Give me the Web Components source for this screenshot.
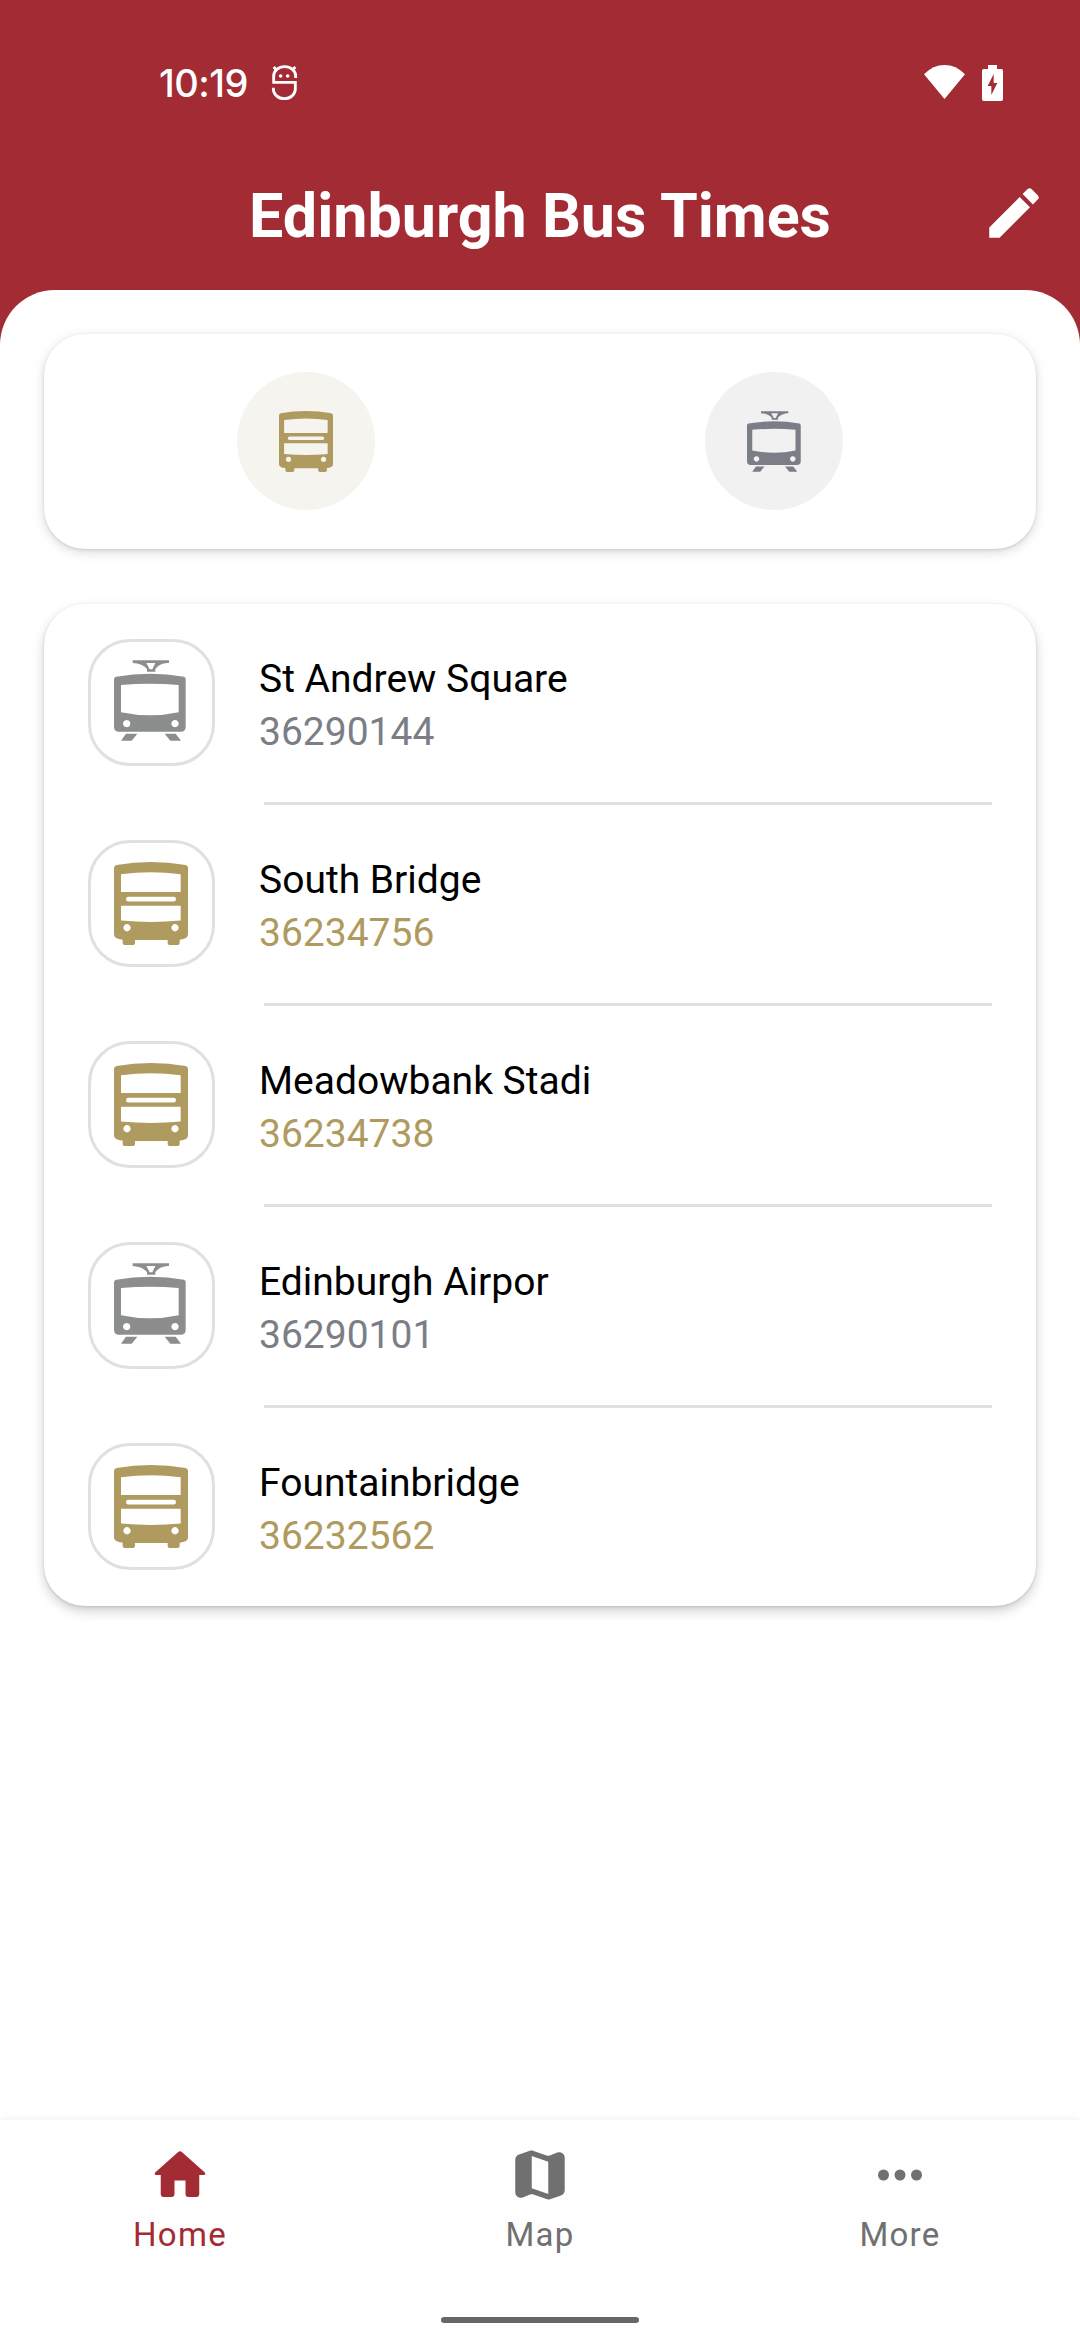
<!DOCTYPE html>
<html lang="en">
<head>
<meta charset="utf-8">
<title>Edinburgh Bus Times</title>
<style>
html,body{margin:0;height:100%;background:#fff}
body{font-family:Roboto,"Liberation Sans",sans-serif;overflow:hidden}
</style>
</head>
<body>
<bus-app></bus-app>
<script>
const ICONS = {
  tram: ['252 211 216 243', '<path fill-rule="evenodd" d="M308 212H417V220H412Q388 222 376 238V246H351V238Q338 222 308 220ZM349 220L359 239H367L376 220Z"/><path fill-rule="evenodd" d="M252 268Q252 263 258 261Q310 252 360 252Q412 252 462 261Q467 263 467 268V411Q467 426 452 426H267Q252 426 252 411ZM273 286V368Q315 377 360 377Q405 377 446 368V286Q360 278 273 286ZM290 391a11 11 0 1 0 .1 0ZM435 391a11 11 0 1 0 .1 0Z"/><path d="M288 432H322L305 453H273ZM404 432H437L453 453H421Z"/>'],
  bus: ['102 93 222 250', '<path fill-rule="evenodd" d="M102 111Q102 104 110 102Q160 93 213 93Q265 93 317 102Q324 104 324 111V311Q324 324 299 327V336Q299 343 291 343H271Q263 343 263 336V328H165V336Q165 343 157 343H136Q128 343 128 336V327Q102 324 102 311ZM123 130V183H302V130Q213 117 123 130ZM145 198a7 7 0 0 0 0 14H281a7 7 0 0 0 0-14ZM123 225V269Q213 278 302 269V225ZM141 280a11 11 0 1 0 .1 0ZM285 280a11 11 0 1 0 .1 0Z"/>'],
  edit: ['0 0 24 24', '<path d="M3 17.25V21h3.75L17.81 9.94l-3.75-3.75L3 17.25zM20.71 7.04c.39-.39.39-1.02 0-1.41l-2.34-2.34c-.39-.39-1.02-.39-1.41 0l-1.83 1.83 3.75 3.75 1.83-1.83z"/>'],
  home: ['0 0 24 24', '<path d="M10 19v-5h4v5c0 .55.45 1 1 1h3c.55 0 1-.45 1-1v-7h1.7c.46 0 .68-.57.33-.87L12.67 3.6c-.38-.34-.96-.34-1.34 0l-8.36 7.53c-.34.3-.13.87.33.87H5v7c0 .55.45 1 1 1h3c.55 0 1-.45 1-1z"/>'],
  map: ['0 0 24 24', '<path d="M14.65 4.98l-5-1.75c-.42-.15-.88-.15-1.3-.01L4.36 4.56C3.55 4.84 3 5.6 3 6.46v11.85c0 1.41 1.41 2.37 2.72 1.86l2.93-1.14c.22-.09.47-.09.69-.01l5 1.75c.42.15.88.15 1.3.01l3.99-1.34c.81-.27 1.36-1.04 1.36-1.9V5.69c0-1.41-1.41-2.37-2.72-1.86l-2.93 1.14c-.22.08-.46.09-.68.01zM15 18.89l-6-2.11V5.11l6 2.11v11.67z"/>'],
  more: ['0 0 24 24', '<circle cx="6" cy="12" r="2"/><circle cx="12" cy="12" r="2"/><circle cx="18" cy="12" r="2"/>'],
  wifi: ['0 0 123 103', '<path d="M0 28Q27 0 61.500 0Q96 0 123 28L61.500 103Z"/>'],
  battery: ['0 0 63 108', '<path fill-rule="evenodd" d="M18 0H45V12H58Q63 12 63 17V103Q63 108 58 108H5Q0 108 0 103V17Q0 12 5 12H18ZM35 27L17 63H28V90L46 54H35Z"/>'],
  mascot: ['396 47 75 105', '<g fill="none" stroke="currentColor" stroke-width="8.500"><path d="M467 86V80A33 28 0 0 0 401 80V99H466V119A33 29 0 0 1 400 119V115"/><path d="M401 53L410 62M466 53L457 62" stroke-width="9"/></g><circle cx="422" cy="80" r="5.500"/><circle cx="443" cy="80" r="5.500"/>']
};

function define(name, render) {
  customElements.define(name, class extends HTMLElement {
    connectedCallback() {
      if (this.shadowRoot) return;
      this.attachShadow({mode: 'open'}).innerHTML = render(this);
    }
  });
}

define('ui-icon', el => {
  const [box, body] = ICONS[el.getAttribute('name')];
  return `<style>:host{display:block;flex:none}svg{display:block;width:100%;height:100%;fill:currentColor;overflow:visible}</style>
  <svg viewBox="${box}" preserveAspectRatio="none" aria-hidden="true">${body}</svg>`;
});

define('status-bar', () => `<style>
  :host{display:flex;height:132px;box-sizing:border-box;padding:65px 77px 0 159px;align-items:flex-start}
  span{font:500 38px/36px Inter,Roboto,sans-serif;width:113px;letter-spacing:-.5px;white-space:nowrap}
  .mascot{width:25px;height:35px}
  .wifi{width:41px;height:34px;margin-left:auto}
  .battery{width:21px;height:36px;margin-left:17px}
  </style><span>10:19</span><ui-icon class="mascot" name="mascot"></ui-icon>
  <ui-icon class="wifi" name="wifi"></ui-icon><ui-icon class="battery" name="battery"></ui-icon>`);

define('app-title', () => `<style>
  :host{display:grid;grid-template-columns:99px 1fr 99px;height:158px;align-items:start}
  h1{grid-column:2;margin:48px 0 0;font-size:61px;line-height:72px;font-weight:700;text-align:center;white-space:nowrap}
  ui-icon{width:66px;height:66px;margin-top:48px}
  </style><h1><slot></slot></h1><ui-icon name="edit"></ui-icon>`);

define('ui-card', () => `<style>
  :host{display:block;background:#fff;border-radius:41px;box-shadow:0 3px 12px rgba(0,0,0,.15),0 1px 3px rgba(0,0,0,.12)}
  :host([raised]){box-shadow:0 5px 12px rgba(0,0,0,.19),0 1px 3px rgba(0,0,0,.13)}
  </style><slot></slot>`);

define('mode-filter', () => `<style>
  :host{display:flex;height:215px;box-sizing:border-box;padding:38px 28px 0 28px}
  div{flex:1;display:flex;justify-content:center}
  b{width:138px;height:138px;border-radius:50%;display:grid;place-items:center}
  .bus{background:#f5f4ef;color:#af9a60}.tram{background:#f1f1f1;color:#7b7e86}
  ui-icon{width:54px;height:61px}
  </style><div><b class="bus"><ui-icon name="bus"></ui-icon></b></div><div><b class="tram"><ui-icon name="tram"></ui-icon></b></div>`);

define('stop-row', el => `<style>
  :host{display:flex;height:198px}
  :host(:not(:last-child)){height:201px}
  .badge{width:127px;height:127px;box-sizing:border-box;border:3px solid #e0e0e0;border-radius:42px;margin:35px 0 0 44px;flex:none}
  [name=bus]{width:74px;height:83px;margin:18.500px 0 0 23px;color:#af9a60}
  [name=tram]{width:72px;height:81px;margin:18px 0 0 23px;color:#8c8e8d}
  .text{margin:0 44px 0 44px;flex:1;display:flex;flex-direction:column;font-size:39px;line-height:53px}
  .name{margin-top:49px;color:#000}
  .code{color:${el.getAttribute('mode') === 'bus' ? '#af9a60' : '#7b7e86'}}
  hr{border:0;height:3px;background:#e0e0e0;margin:auto 0 0 5px}
  :host(:last-child) hr{display:none}
  </style><div class="badge"><ui-icon name="${el.getAttribute('mode')}"></ui-icon></div>
  <div class="text"><div class="name"><slot></slot></div><div class="code">${el.getAttribute('code')}</div><hr></div>`);

define('nav-item', () => `<style>
  :host{flex:1;display:flex;flex-direction:column;align-items:center;padding-top:22px;color:#707070}
  :host([active]){color:#a22b34}
  span{font-size:33px;line-height:40px;letter-spacing:1.300px;margin-top:7px}
  </style><slot name="icon"></slot><span><slot></slot></span>`);

define('bottom-nav', () => `<style>
  :host{display:flex;flex-direction:column;height:220px;background:#fefefe;box-shadow:0 0 7px rgba(0,0,0,.08)}
  nav{display:flex;height:197px}
  i{display:block;width:198px;height:6px;border-radius:3px;background:#676767;margin:0 auto}
  </style><nav><slot></slot></nav><i></i>`);

define('bus-app', () => `<style>
  :host{display:flex;flex-direction:column;width:1080px;height:2340px;background:#a22b34}
  header{color:#fff}
  main{flex:1;background:#fff;border-radius:55px 55px 0 0;padding:44px 44px 0;display:flex;flex-direction:column;gap:55px}
  nav-item ui-icon{width:66px;height:66px}
  </style>
  <header><status-bar></status-bar><app-title>Edinburgh Bus Times</app-title></header>
  <main>
    <ui-card><mode-filter></mode-filter></ui-card>
    <ui-card raised>
      <stop-row mode="tram" code="36290144">St Andrew Square</stop-row>
      <stop-row mode="bus" code="36234756">South Bridge</stop-row>
      <stop-row mode="bus" code="36234738">Meadowbank Stadi</stop-row>
      <stop-row mode="tram" code="36290101">Edinburgh Airpor</stop-row>
      <stop-row mode="bus" code="36232562">Fountainbridge</stop-row>
    </ui-card>
  </main>
  <bottom-nav>
    <nav-item active><ui-icon slot="icon" name="home"></ui-icon>Home</nav-item>
    <nav-item><ui-icon slot="icon" name="map"></ui-icon>Map</nav-item>
    <nav-item><ui-icon slot="icon" name="more"></ui-icon>More</nav-item>
  </bottom-nav>`);
</script>
</body>
</html>
